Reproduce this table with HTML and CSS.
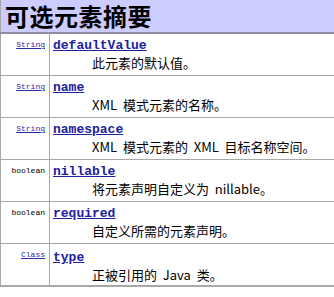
FILE: index.html
```html
<!DOCTYPE html>
<html>
<head>
<meta charset="utf-8">
<link rel="stylesheet" href="styles.css">
</head>
<body>
<table class="summary">
  <tr><th class="title" colspan="2">可选元素摘要</th></tr>
  <tr>
    <td class="type"><a href="#">String</a></td>
    <td class="main"><a class="name" href="#">defaultValue</a><div class="desc">此元素的默认值。</div></td>
  </tr>
  <tr>
    <td class="type"><a href="#">String</a></td>
    <td class="main"><a class="name" href="#">name</a><div class="desc">XML&nbsp; 模式元素的名称。</div></td>
  </tr>
  <tr>
    <td class="type"><a href="#">String</a></td>
    <td class="main"><a class="name" href="#">namespace</a><div class="desc">XML&nbsp; 模式元素的&nbsp; XML&nbsp; 目标名称空间。</div></td>
  </tr>
  <tr>
    <td class="type"><span>boolean</span></td>
    <td class="main"><a class="name" href="#">nillable</a><div class="desc">将元素声明自定义为&nbsp; nillable。</div></td>
  </tr>
  <tr>
    <td class="type"><span>boolean</span></td>
    <td class="main"><a class="name" href="#">required</a><div class="desc">自定义所需的元素声明。</div></td>
  </tr>
  <tr>
    <td class="type"><a href="#">Class</a></td>
    <td class="main last"><a class="name" href="#">type</a><div class="desc">正被引用的&nbsp; Java&nbsp; 类。</div></td>
  </tr>
</table>
</body>
</html>
```
FILE: styles.css
```css
html, body {
  margin: 0;
  padding: 0;
  background: #fff;
}
body {
  font-family: "Noto Sans CJK SC", "DejaVu Sans", sans-serif;
  color: #000;
}
.summary {
  width: 100%;
  border-collapse: collapse;
  border-left: 1px solid #a8a8a8;
  border-bottom: 2px solid #a8a8a8;
}
.title {
  background: #ccccff;
  height: 32px;
  padding: 0 0 0 4px;
  text-align: left;
  font-size: 24px;
  font-weight: bold;
  line-height: 32px;
  letter-spacing: 0.5px;
  border-bottom: 2px solid #8f8fa0;
}
.summary td {
  vertical-align: top;
  border-bottom: 1px solid #a8a8a8;
}
.type {
  width: 44px;
  text-align: right;
  padding: 6px 4px 0 0;
  border-right: 1px solid #a8a8a8;
  font-family: "Liberation Mono", monospace;
  font-size: 8px;
  line-height: 10px;
}
.type a {
  color: #2a2aa8;
}
.main {
  padding: 4px 3px 3px 3px;
}
.main.last {
  padding-top: 6px;
  padding-bottom: 1px;
}
.name {
  display: block;
  font-family: "Liberation Mono", monospace;
  font-weight: bold;
  font-size: 13px;
  line-height: 16px;
  color: #2020a0;
  text-decoration: underline;
}
.desc {
  padding-left: 39px;
  font-size: 13px;
  line-height: 18px;
}
```
